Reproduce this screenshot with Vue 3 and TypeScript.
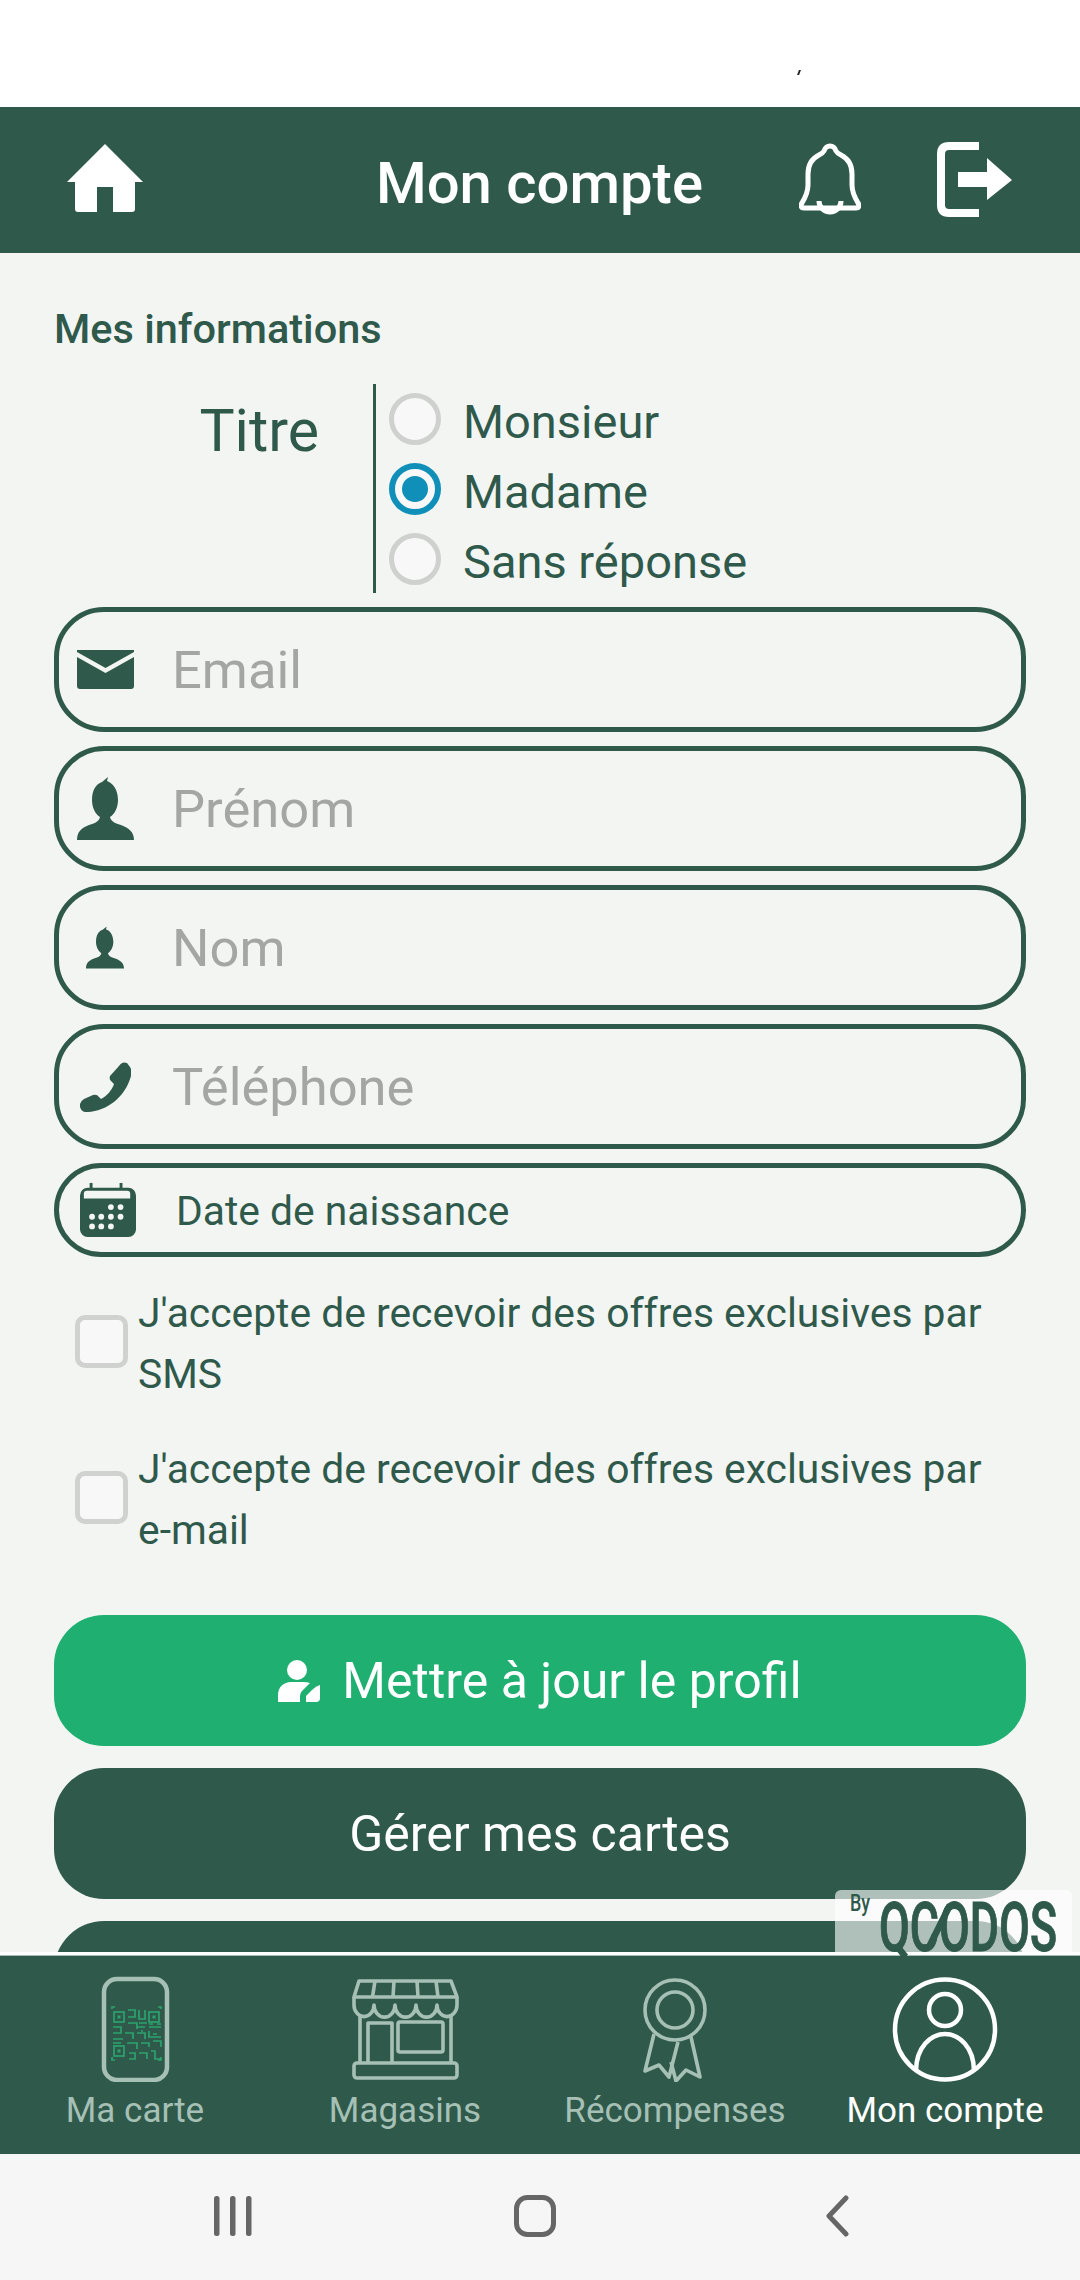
<script setup lang="ts">
interface Field { label: string; icon: string }
const titles = [
  { label: 'Monsieur', on: false },
  { label: 'Madame', on: true },
  { label: 'Sans réponse', on: false },
]
const fields: Field[] = [
  { label: 'Email', icon: 'mail' },
  { label: 'Prénom', icon: 'big' },
  { label: 'Nom', icon: 'small' },
  { label: 'Téléphone', icon: 'phone' },
]
const consents = ['SMS', 'e-mail']
const tabs = [
  { label: 'Ma carte', icon: 'card', on: false },
  { label: 'Magasins', icon: 'store', on: false },
  { label: 'Récompenses', icon: 'medal', on: false },
  { label: 'Mon compte', icon: 'user', on: true },
]
const bust = 'M0 63c0-8 4-12 12-15 7-2 10-4 11-8-5-3-8-10-8-17 0-10 4-16 10-18l6-5-1 4c6 2 11 9 11 19 0 7-3 14-8 17 1 4 4 6 11 8 8 3 13 7 13 15z'
</script>

<template>
  <div class="screen">
    <div class="status"><i class="speck"></i></div>

    <header class="top">
      <svg class="home" viewBox="67 145 77 68"><path d="M105 145 143 183H135V210Q135 213 132 213H113V188H97V213H78Q75 213 75 210V183H67Z" fill="#fff"/></svg>
      <h1>Mon compte</h1>
      <div class="top-right">
        <svg class="bell" viewBox="799 144 62 72" fill="none" stroke="#fff" stroke-width="5" stroke-linejoin="round">
          <path d="M830 147c-3 0-5 2-6 5-1 2-3 3-5 4-8 4-11 11-11 19v11c0 8-3 13-6 18-2 3-1 5 2 5h52c3 0 4-2 2-5-3-5-6-10-6-18v-11c0-8-3-15-11-19-2-1-4-2-5-4-1-3-3-5-6-5z"/>
          <path d="M819 202a11 11 0 0 0 22 0"/>
        </svg>
        <svg class="exit" viewBox="937 142 75 75">
          <path d="M979 146H949q-8 0-8 8V205q0 8 8 8H979" fill="none" stroke="#fff" stroke-width="8"/>
          <path d="M958 172H987V158L1012 180 987 200V187H958Z" fill="#fff"/>
        </svg>
      </div>
    </header>

    <main class="body">
      <h2>Mes informations</h2>

      <section class="title-row">
        <div class="title-label">Titre</div>
        <div class="title-opts">
          <div v-for="t in titles" :key="t.label" class="opt">
            <span class="radio" :class="{ on: t.on }"></span>
            <span class="opt-text">{{ t.label }}</span>
          </div>
        </div>
      </section>

      <div class="fields">
        <div v-for="f in fields" :key="f.label" class="field">
          <span class="ficon">
            <svg v-if="f.icon === 'mail'" width="57" height="39" viewBox="77 650 57 39" fill="#2f5a4b">
              <path d="M77 650H134V652L105.500 668 77 652Z"/>
              <path d="M77 657 105.500 673 134 657V686Q134 689 131 689H80Q77 689 77 686Z"/>
            </svg>
            <svg v-else-if="f.icon === 'big'" width="57" height="63" viewBox="0 0 57 63" fill="#2f5a4b"><path :d="bust"/></svg>
            <svg v-else-if="f.icon === 'small'" class="small" width="38" height="43" viewBox="0 0 57 63" fill="#2f5a4b"><path :d="bust"/></svg>
            <svg v-else class="tel" width="51" height="50" viewBox="80 1060 51 50" fill="#2f5a4b">
              <path d="M119 1064Q122 1059 127 1061L130 1065Q132 1068 131 1074C125 1096 106 1109 88 1110Q82 1111 80 1105 79 1100 84 1097L93 1093Q97 1092 99 1095L101 1097C107 1094 112 1088 114 1082L111 1079Q109 1077 110 1074Z"/>
            </svg>
          </span>
          <span class="ph">{{ f.label }}</span>
        </div>

        <div class="field date">
          <span class="ficon">
            <svg class="cal" width="56" height="56" viewBox="10 11 58 56">
              <rect x="20" y="11" width="3" height="8" fill="#2f5a4b"/>
              <rect x="51" y="11" width="3" height="8" fill="#2f5a4b"/>
              <rect x="10" y="16" width="58" height="51" rx="8" fill="#2f5a4b"/>
              <path d="M14 27V22q0-3 3-3H59q3 0 3 3V27Z" fill="#f4f6f4"/>
              <g fill="#f4f6f4">
                <circle cx="42" cy="36" r="3"/><circle cx="52" cy="36" r="3"/>
                <circle cx="22.500" cy="46" r="3"/><circle cx="32" cy="46" r="3"/><circle cx="42" cy="46" r="3"/><circle cx="52" cy="46" r="3"/>
                <circle cx="22.500" cy="56" r="3"/><circle cx="32" cy="56" r="3"/><circle cx="42" cy="56" r="3"/>
              </g>
            </svg>
          </span>
          <span class="date-text">Date de naissance</span>
        </div>
      </div>

      <div class="consents">
        <div v-for="c in consents" :key="c" class="consent">
          <span class="box"></span>
          <p>J'accepte de recevoir des offres exclusives par <span class="nowrap">{{ c }}</span></p>
        </div>
      </div>

      <div class="buttons">
        <button class="btn green">
          <svg width="42" height="42" viewBox="278 1660 42 42" fill="#fff">
            <circle cx="297" cy="1670" r="10"/>
            <path d="M278 1702V1695C278 1687 284 1682 291 1682H303Q307 1682 310 1683L302 1691Q300 1693 300 1696V1702Z"/>
            <path d="M306 1702H316Q320 1702 320 1698V1685Q316 1686 312 1690L306 1696Z"/>
          </svg>
          <span>Mettre à jour le profil</span>
        </button>
        <button class="btn dark">Gérer mes cartes</button>
        <button class="btn dark"></button>
      </div>
    </main>

    <div class="logo">
      <span class="by">By</span>
      <svg class="logo-mark" width="178" height="52" viewBox="0 0 178 52">
        <text x="0" y="51" textLength="178" lengthAdjust="spacingAndGlyphs" class="logo-text">QCODOS</text>
        <path d="M50 47 71 5" stroke="#2f5a4b" stroke-width="6.500" fill="none"/>
      </svg>
    </div>

    <nav class="tabs">
      <div v-for="t in tabs" :key="t.label" class="tab" :class="{ on: t.on }">
        <svg v-if="t.icon === 'card'" class="ticon" viewBox="80 1976 110 106" fill="none">
          <rect x="104" y="1979" width="63" height="101" rx="13" stroke="#a6c0b6" stroke-width="4.500"/>
          <g transform="translate(77 1977)" stroke="#2ba36e" stroke-width="1.700">
            <rect x="37" y="35" width="10" height="10"/><rect x="40.500" y="38.500" width="3" height="3" fill="#2ba36e" stroke="none"/>
            <rect x="72" y="35" width="10" height="10"/><rect x="75.500" y="38.500" width="3" height="3" fill="#2ba36e" stroke="none"/>
            <rect x="37" y="69" width="10" height="10"/><rect x="40.500" y="72.500" width="3" height="3" fill="#2ba36e" stroke="none"/>
            <path d="M51 33H58V40H51M62 33V42H68V33M51 46H60V52M36 50H44V56H36M48 56H56V62M60 50H68M72 50H84M72 54V60H84M60 56H68V62M36 62H46M50 66H60V72M64 66H72V70M76 64H84V70M52 76H58V82H52M62 76H70V82M74 74H78V82H84M36 66H44M62 46H70M72 47H76M80 47H84M64 54H66M76 57H80"/>
            <path d="M35 32V30H38M81 30H84V32M35 80V83H38M81 83H84V80"/>
          </g>
        </svg>

        <svg v-else-if="t.icon === 'store'" class="ticon" viewBox="350 1976 110 106" fill="none" stroke="#a6c0b6" stroke-width="3.600" stroke-linejoin="round">
          <path d="M359 1981H451L457 1997H354Z"/>
          <path d="M375 1981 372.500 1997M394 1981 393 1997M417 1981 418 1997M436 1981 438 1997"/>
          <path d="M354 1997V2005A9.500 11 0 0 0 374 2005A9.500 11 0 0 0 395 2005A9.500 11 0 0 0 416 2005A9.500 11 0 0 0 437 2005A9.500 11 0 0 0 457 2005V1997"/>
          <path d="M360 2014V2063M451 2014V2063"/>
          <path d="M368 2063V2023H392V2063"/>
          <rect x="398" y="2022" width="45" height="30" rx="2"/>
          <rect x="354" y="2063" width="103" height="15" rx="3"/>
        </svg>

        <svg v-else-if="t.icon === 'medal'" class="ticon" viewBox="620 1976 110 106" fill="none" stroke="#a6c0b6" stroke-width="3.600" stroke-linejoin="round">
          <circle cx="675" cy="2010" r="30"/>
          <circle cx="675" cy="2010" r="18"/>
          <path d="M654 2034 645 2071 659 2065 669 2077 678 2042"/>
          <path d="M691 2037 700 2077 686 2070 676 2081 671 2062"/>
        </svg>

        <svg v-else class="ticon" viewBox="890 1976 110 106" fill="none" stroke="#fff" stroke-width="4.500">
          <circle cx="945" cy="2029.500" r="50"/>
          <circle cx="945" cy="2010" r="16"/>
          <path d="M916 2071C916 2047 931 2034 945 2034 959 2034 974 2047 974 2071"/>
        </svg>
        <span class="tlabel">{{ t.label }}</span>
      </div>
    </nav>

    <footer class="sys">
      <svg width="38" height="42" viewBox="0 0 38 42" fill="#666"><rect x="0" y="1" width="5.500" height="40" rx="2.500"/><rect x="16" y="1" width="5.500" height="40" rx="2.500"/><rect x="32" y="1" width="5.500" height="40" rx="2.500"/></svg>
      <svg width="42" height="42" viewBox="0 0 42 42" fill="none"><rect x="2.500" y="2.500" width="37" height="37" rx="11" stroke="#666" stroke-width="5"/></svg>
      <svg width="24" height="42" viewBox="0 0 24 42" fill="none"><path d="M21 3 4 21 21 39" stroke="#666" stroke-width="5" stroke-linecap="round" stroke-linejoin="round"/></svg>
    </footer>
  </div>
</template>

<style scoped>
.screen {
  width: 1080px;
  height: 2280px;
  display: flex;
  flex-direction: column;
  overflow: hidden;
  background: #f3f5f3;
  color: #2f5a4b;
  font-family: Roboto, "Liberation Sans", sans-serif;
  position: relative;
}
.status { height: 107px; background: #fff; flex: none; }
.speck {
  position: absolute;
  left: 798px;
  top: 70px;
  width: 2px;
  height: 5px;
  background: #222;
  transform: skewX(-20deg);
}
.top {
  height: 146px;
  flex: none;
  background: #2f5a4b;
  display: grid;
  grid-template-columns: 1fr auto 1fr;
  align-items: center;
  padding: 0 68px 0 67px;
  color: #fff;
}
.home { width: 77px; height: 68px; margin-top: -4px; }
.top h1 { margin: 0; padding-top: 5px; font-size: 58px; font-weight: 500; line-height: 1; }
.top-right { display: flex; justify-content: flex-end; align-items: center; gap: 76px; margin-top: -2px; }
.bell { width: 62px; height: 72px; }
.exit { width: 75px; height: 75px; }
.body {
  flex: 1;
  min-height: 0;
  overflow: hidden;
  padding: 0 54px;
}
h2 {
  margin: 0;
  padding-top: 53px;
  font-size: 41.500px;
  line-height: 46px;
  font-weight: 500;
}
.title-row { display: flex; margin-top: 32px; height: 209px; }
.title-label {
  width: 319px;
  padding: 13px 54px 0 0;
  box-sizing: border-box;
  text-align: right;
  font-size: 59px;
  line-height: 68px;
}
.title-opts { border-left: 3px solid #2f5a4b; padding-left: 13px; }
.opt { display: flex; align-items: center; height: 70px; gap: 22px; font-size: 47px; }
.opt-text { padding-top: 5px; }
.radio {
  width: 52px;
  height: 52px;
  box-sizing: border-box;
  border: 5px solid #cfd1cf;
  border-radius: 50%;
  background: #f8f8f8;
  position: relative;
}
.radio.on { border: 6px solid #1090b8; }
.radio.on::after {
  content: "";
  position: absolute;
  inset: 7px;
  border-radius: 50%;
  background: #1090b8;
}
.fields { margin-top: 14px; display: flex; flex-direction: column; gap: 14px; }
.field {
  height: 125px;
  box-sizing: border-box;
  border: 5px solid #2f5a4b;
  border-radius: 50px;
  display: flex;
  align-items: center;
  padding-left: 18px;
}
.ficon { width: 95px; display: flex; align-items: center; flex: none; }
.small { margin-left: 9px; }
.tel { margin-left: 3px; }
.cal { margin-left: 3px; }
.ph { font-size: 52.500px; color: #a4a6a4; }
.date { height: 94px; border-radius: 47px; }
.date .ficon { width: 99px; }
.date-text { font-size: 40.800px; padding-top: 2px; }
.consents { margin-top: 26px; display: flex; flex-direction: column; gap: 34px; padding-left: 21px; }
.consent { display: flex; align-items: center; gap: 10px; }
.consent p { margin: 0; font-size: 40.800px; line-height: 61px; }
.nowrap { white-space: nowrap; }
.box {
  width: 53px;
  height: 53px;
  flex: none;
  box-sizing: border-box;
  border: 5px solid #d0d2d0;
  border-radius: 10px;
  background: #f8f8f8;
  margin-bottom: 5px;
}
.buttons { margin-top: 54px; display: flex; flex-direction: column; gap: 22px; }
.btn {
  height: 131px;
  flex: none;
  border: 0;
  border-radius: 50px;
  color: #fff;
  font-family: inherit;
  font-size: 50px;
  display: flex;
  align-items: center;
  justify-content: center;
  gap: 22px;
  padding: 0;
}
.green { background: #1fb071; }
.dark { background: #2f5a4b; }
.logo {
  position: absolute;
  left: 835px;
  top: 1890px;
  width: 237px;
  height: 62px;
  background: rgba(255, 255, 255, 0.62);
  border-radius: 6px 6px 0 0;
}
.by {
  position: absolute;
  left: 15px;
  top: 0;
  font-size: 24px;
  font-weight: 500;
  line-height: 26px;
  transform: scaleX(0.75);
  transform-origin: left;
}
.logo-mark { position: absolute; left: 44px; top: 10px; overflow: visible; }
.logo-text { font-family: Roboto, sans-serif; font-size: 69px; font-weight: 500; fill: #2f5a4b; stroke: #2f5a4b; stroke-width: 1px; }
.tabs {
  height: 202px;
  flex: none;
  box-sizing: border-box;
  border-top: 3px solid #fff;
  background: #2f5a4b;
  display: grid;
  grid-template-columns: repeat(4, 270px);
  box-shadow: inset 0 1px 0 #a6c0b6;
}
.tab {
  display: flex;
  flex-direction: column;
  align-items: center;
  padding-top: 21px;
  color: #a6c0b6;
}
.tab.on { color: #fff; }
.ticon { width: 110px; height: 106px; }
.tlabel { font-size: 35px; line-height: 44px; margin-top: 7px; white-space: nowrap; }
.sys {
  height: 126px;
  flex: none;
  background: #f6f6f6;
  display: grid;
  grid-template-columns: repeat(3, 302px);
  padding: 0 0 2px 82px;
  box-sizing: border-box;
  justify-items: center;
  align-items: center;
}
</style>

<style>
html, body { margin: 0; padding: 0; background: #f3f5f3; }
</style>
